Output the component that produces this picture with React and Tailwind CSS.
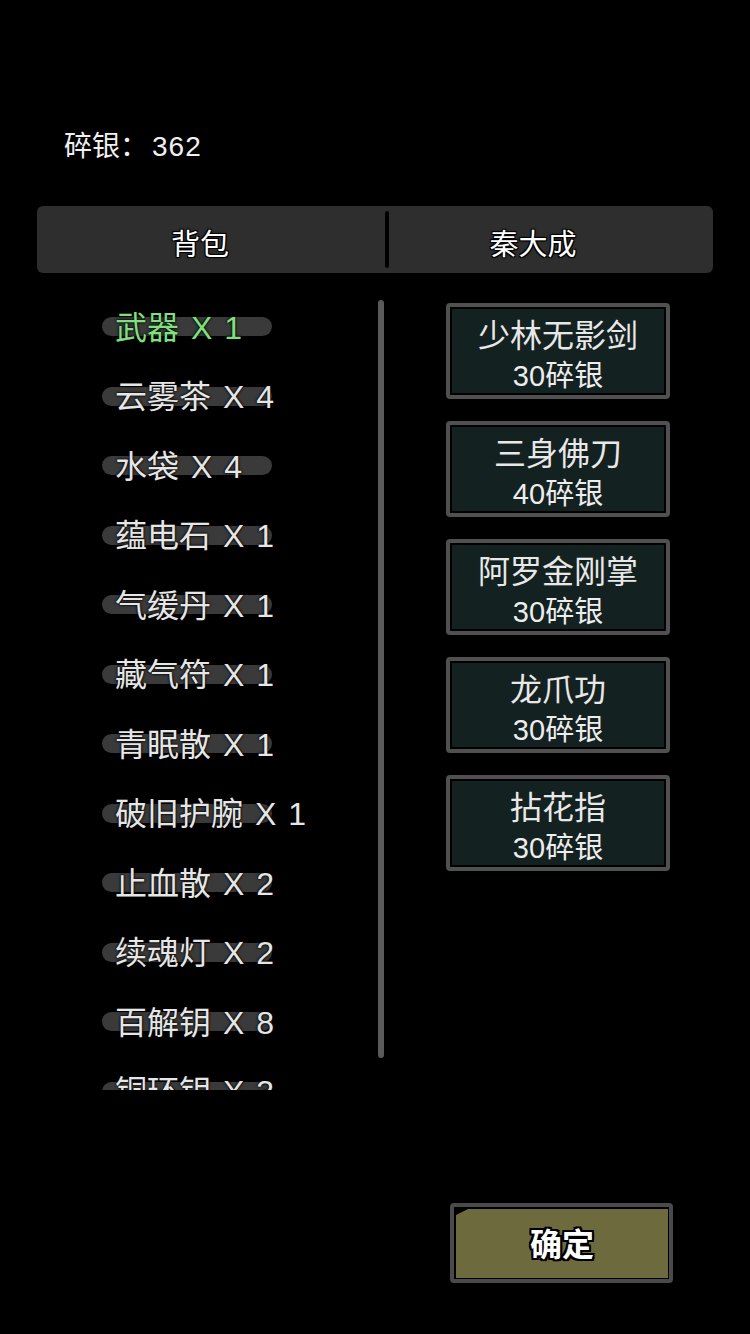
import React from "react";

const items = [
  { name: "武器", count: 1, active: true },
  { name: "云雾茶", count: 4 },
  { name: "水袋", count: 4 },
  { name: "蕴电石", count: 1 },
  { name: "气缓丹", count: 1 },
  { name: "藏气符", count: 1 },
  { name: "青眠散", count: 1 },
  { name: "破旧护腕", count: 1 },
  { name: "止血散", count: 2 },
  { name: "续魂灯", count: 2 },
  { name: "百解钥", count: 8 },
  { name: "铜环钥", count: 3 },
];

const goods = [
  { name: "少林无影剑", price: 30 },
  { name: "三身佛刀", price: 40 },
  { name: "阿罗金刚掌", price: 30 },
  { name: "龙爪功", price: 30 },
  { name: "拈花指", price: 30 },
];

const font = {
  fontFamily: '"Liberation Sans", "Noto Sans CJK SC", sans-serif',
};

const outline =
  "[text-shadow:-1px_-1px_0_#000,1px_-1px_0_#000,-1px_1px_0_#000,1px_1px_0_#000,0_0_3px_#000]";

export default function App() {
  return (
    <div
      className="w-[750px] h-[1334px] bg-black text-[#e8e8e8] flex flex-col overflow-hidden"
      style={font}
    >
      {/* silver balance */}
      <div className="h-[206px] pt-[127px] pl-[64px]">
        <div className="text-[28px] leading-[40px] text-[#f0f0f0] whitespace-nowrap">
          碎银：<span className="ml-[4px] tracking-[1px]">362</span>
        </div>
      </div>

      {/* tabs */}
      <div className="mx-[37px] h-[67px] rounded-[6px] bg-[#2e2e2e] flex items-center">
        <div className="w-[348px] flex">
          <div className={`w-[326px] pt-[10px] text-center text-[29px] leading-[40px] text-white ${outline}`}>
            背包
          </div>
        </div>
        <div className="w-[4px] h-[57px] rounded-full bg-black" />
        <div className={`w-[284px] ml-[2px] pt-[10px] text-center text-[29px] leading-[40px] text-white ${outline}`}>
          秦大成
        </div>
      </div>

      {/* body */}
      <div className="mt-[19px] mx-[37px] h-[798px] flex">
        {/* bag list */}
        <div className="relative w-[353px] h-full overflow-hidden">
          <div className="flex flex-col">
            {items.map((it) => (
              <div key={it.name} className="h-[69.5px] grid items-center shrink-0">
                <div className="[grid-area:1/1] ml-[65px] w-[170px] h-[19px] rounded-full bg-[#3a3a3a]" />
                <div
                  className={`[grid-area:1/1] ml-[78px] mt-[2px] text-[32px] leading-[40px] whitespace-nowrap [word-spacing:3px] [text-shadow:0_0_2px_#000,0_0_3px_#000] ${
                    it.active ? "text-[#7fe07f]" : "text-[#e6e6e6]"
                  }`}
                >
                  {it.name} X {it.count}
                </div>
              </div>
            ))}
          </div>
          {/* scrollbar */}
          <div className="absolute left-[341px] top-[8px] w-[6px] h-[758px] rounded-full bg-[#5a5a5a]" />
        </div>

        {/* shop goods */}
        <div className="pl-[56px] pt-[11px] flex flex-col gap-[22px]">
          {goods.map((g) => (
            <div
              key={g.name}
              className="w-[224px] h-[96px] rounded-[4px] border-[4px] border-[#505050] bg-black p-[2px]"
            >
              <div className="w-full h-full bg-[#132120] flex flex-col items-center">
                <div className="mt-[7px] text-[32px] leading-[40px] text-[#e8e8e8] whitespace-nowrap">
                  {g.name}
                </div>
                <div className="mt-[2px] text-[29px] leading-[36px] text-[#ededed] whitespace-nowrap">
                  {g.price}碎银
                </div>
              </div>
            </div>
          ))}
        </div>
      </div>

      {/* confirm */}
      <div className="mt-[113px] ml-[450px] w-[223px] h-[80px] rounded-[4px] border-[4px] border-[#4a4a4a] bg-black pl-[2px] pt-[2px] pr-[1px] pb-[1px]">
        <div className="w-full h-full bg-[#6d6b3e] flex items-center justify-center [clip-path:polygon(12px_0,100%_0,100%_100%,0_100%,0_6px)]">
          <span className="mt-[2px] text-[32px] leading-[40px] font-bold text-white [text-shadow:-2px_-2px_0_#000,2px_-2px_0_#000,-2px_2px_0_#000,2px_2px_0_#000,0_2px_0_#000,0_-2px_0_#000,2px_0_0_#000,-2px_0_0_#000]">
            确定
          </span>
        </div>
      </div>
    </div>
  );
}
